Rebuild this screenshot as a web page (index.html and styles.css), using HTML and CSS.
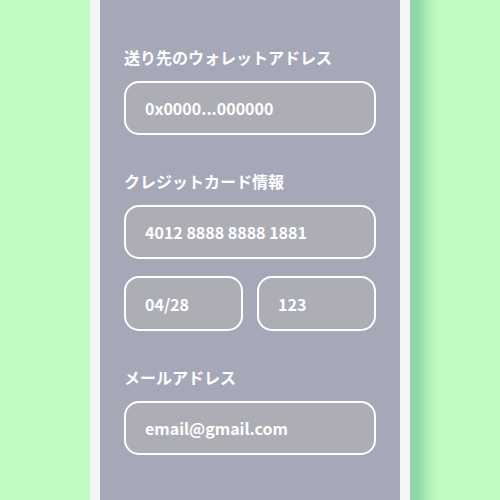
FILE: index.html
```html
<!DOCTYPE html>
<html lang="ja">

<head>
    <meta charset="UTF-8">
    <meta name="viewport" content="width=device-width, initial-scale=1.0">
    <title>送金フォーム</title>
    <link rel="stylesheet" href="styles.css">
</head>

<body>
    <main class="card">
        <form class="form">
            <div class="field">
                <label class="label" for="wallet">送り先のウォレットアドレス</label>
                <input class="input" id="wallet" type="text" value="0x0000...000000">
            </div>

            <div class="field">
                <label class="label" for="card-number">クレジットカード情報</label>
                <input class="input" id="card-number" type="text" value="4012 8888 8888 1881">
                <div class="row">
                    <input class="input" type="text" value="04/28">
                    <input class="input" type="text" value="123">
                </div>
            </div>

            <div class="field">
                <label class="label" for="email">メールアドレス</label>
                <input class="input" id="email" type="email" value="email@gmail.com">
            </div>
        </form>
    </main>
</body>

</html>
```

FILE: styles.css
```css
* {
    box-sizing: border-box;
}

body {
    margin: 0;
    height: 500px;
    overflow: hidden;
    background-color: #c1fdc3;
    font-family: "Noto Sans CJK JP", "Noto Sans", sans-serif;
}

.card {
    width: 320px;
    height: 540px;
    margin: -20px auto 0;
    padding: 55px 24px 0;
    background-color: #a6a8b8;
    border: 10px solid #f5f5f8;
    box-shadow: 16px 0 14px rgba(40, 140, 110, 0.35);
}

.form {
    display: flex;
    flex-direction: column;
    gap: 34px;
}

.field {
    display: flex;
    flex-direction: column;
}

.label {
    height: 24px;
    line-height: 24px;
    margin-bottom: 12px;
    color: #fff;
    font-size: 16px;
    font-weight: 700;
}

.input {
    width: 100%;
    height: 54px;
    padding: 0 19px;
    border: 2px solid #fff;
    border-radius: 15px;
    background-color: rgba(185, 185, 175, 0.35);
    color: #fff;
    font-family: inherit;
    font-size: 16px;
    font-weight: 700;
    outline: none;
}

.row {
    display: flex;
    gap: 14px;
    margin-top: 17px;
}

.row .input {
    flex: 1;
    min-width: 0;
    height: 55px;
}
```
